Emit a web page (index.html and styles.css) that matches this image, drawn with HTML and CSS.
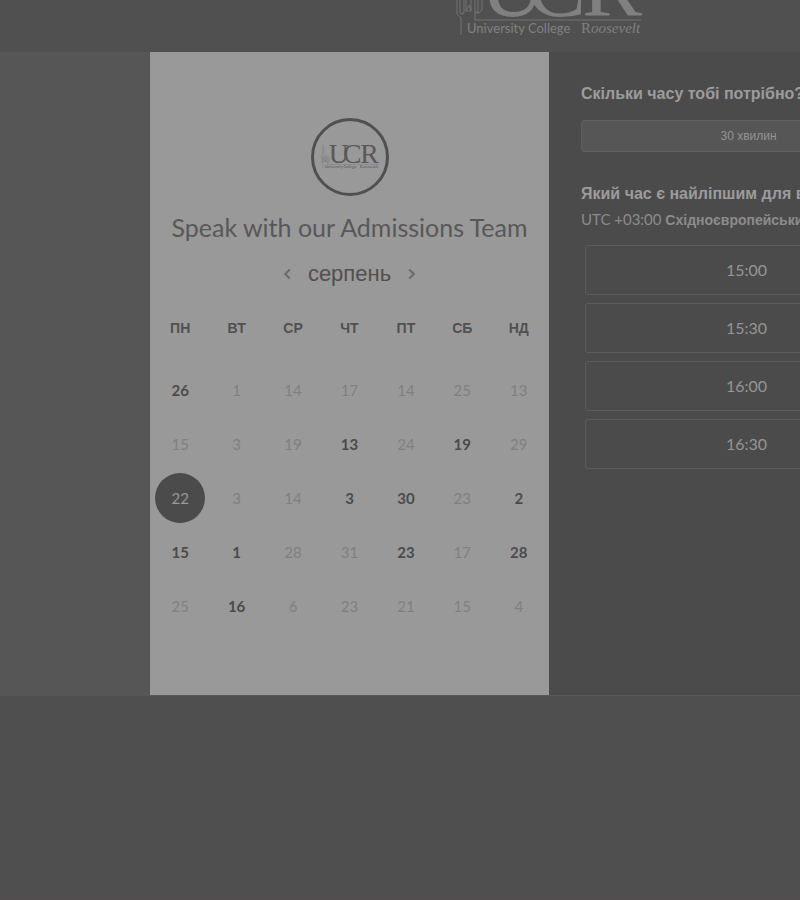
FILE: index.html
```html
<!DOCTYPE html>
<html lang="uk">
<head>
<meta charset="utf-8">
<title>Speak with our Admissions Team</title>
<link rel="stylesheet" href="styles.css">
</head>
<body>
<div class="page">
  <header class="top">
    <svg class="brand" viewBox="0 0 188 84" role="img" aria-label="University College Roosevelt">
      <defs>
        <g id="logo">
          <path class="tower" d="M6 81V64l-4-4V36l3-7V10l2-8 2 8v19l2 7v21h5V42l2-6 2 6v16h3V44l2-4 2 4v12l-3 3h-3M5 40v19l2 1 2-1V40M11 57l3-6 2 6M20 58v8"/>
          <path class="rule" d="M20 66h166"/>
          <text class="letters" y="62"><tspan x="25">U</tspan><tspan x="71">C</tspan><tspan x="127">R</tspan></text>
          <text class="caption" x="12" y="79">University College</text>
          <text class="caption-em" x="126" y="79">R<tspan class="slant">oosevelt</tspan></text>
        </g>
      </defs>
      <use href="#logo"/>
    </svg>
  </header>
  <main class="stage">
    <section class="calendar">
      <div class="avatar">
        <svg class="badge" viewBox="0 0 188 84" aria-hidden="true"><use href="#logo"/></svg>
      </div>
      <h1 class="title">Speak with our Admissions Team</h1>
      <div class="month">
        <button class="arrow" type="button" aria-label="Попередній місяць"><svg viewBox="0 0 8 12"><path d="M6 2 2 6l4 4"/></svg></button>
        <h2 class="month-name">серпень</h2>
        <button class="arrow" type="button" aria-label="Наступний місяць"><svg viewBox="0 0 8 12"><path d="m2 2 4 4-4 4"/></svg></button>
      </div>
      <table class="days">
        <thead><tr><th>ПН</th><th>ВТ</th><th>СР</th><th>ЧТ</th><th>ПТ</th><th>СБ</th><th>НД</th></tr></thead>
        <tbody>
          <tr><td class="open">26</td><td>1</td><td>14</td><td>17</td><td>14</td><td>25</td><td>13</td></tr>
          <tr><td>15</td><td>3</td><td>19</td><td class="open">13</td><td>24</td><td class="open">19</td><td>29</td></tr>
          <tr><td><button class="picked" type="button">22</button></td><td>3</td><td>14</td><td class="open">3</td><td class="open">30</td><td>23</td><td class="open">2</td></tr>
          <tr><td class="open">15</td><td class="open">1</td><td>28</td><td>31</td><td class="open">23</td><td>17</td><td class="open">28</td></tr>
          <tr><td>25</td><td class="open">16</td><td>6</td><td>23</td><td>21</td><td>15</td><td>4</td></tr>
        </tbody>
      </table>
    </section>
    <section class="booking">
      <h3 class="question">Скільки часу тобі потрібно?</h3>
      <button class="duration" type="button">30 хвилин</button>
      <h3 class="question">Який час є найліпшим для вас?</h3>
      <p class="zone">UTC +03:00 <b>Східноєвропейський час</b></p>
      <div class="slots">
        <button class="slot" type="button">15:00</button>
        <button class="slot" type="button">15:30</button>
        <button class="slot" type="button">16:00</button>
        <button class="slot" type="button">16:30</button>
      </div>
    </section>
  </main>
</div>
</body>
</html>
```
FILE: styles.css
```css
* { box-sizing: border-box; }
body {
  margin: 0;
  min-height: 100vh;
  overflow: hidden;
  background: #4f4f4f;
  border-bottom: 1px solid #554c50;
  font-family: "Liberation Sans", sans-serif;
}
button { margin: 0; padding: 0; border: 0; background: none; font: inherit; }
h1, h2, h3, p { margin: 0; font-weight: 400; }

.page { min-width: 1098px; }
.top {
  height: 52px;
  display: flex;
  justify-content: center;
  align-items: flex-end;
  padding-bottom: 14px;
  background: #505050;
}
.brand { width: 188px; height: 84px; flex: none; color: #808080; overflow: visible; }
.tower, .rule { fill: none; stroke: currentColor; stroke-width: 1; opacity: .7; }
.letters { font: 90px "Liberation Serif", serif; fill: currentColor; }
.caption { font: 13px Lato, sans-serif; fill: currentColor; }
.caption-em { font: 15px "Liberation Serif", serif; fill: currentColor; }
.slant { font-style: italic; }

.stage {
  display: flex;
  justify-content: center;
  background: #565656;
  border-bottom: 1px solid #585858;
}
.calendar {
  width: 399px;
  min-height: 643px;
  padding: 66px 2px 0;
  display: flex;
  flex-direction: column;
  align-items: center;
  background: #999;
  color: #505050;
}
.avatar {
  width: 78px;
  height: 78px;
  display: flex;
  align-items: center;
  justify-content: center;
  border: 3px solid #505050;
  border-radius: 50%;
}
.badge { width: 58px; height: 26px; color: #585858; overflow: visible; }
.title { margin-top: 15px; font: 25px/32px Lato, sans-serif; white-space: nowrap; color: #585858; }
.month { display: flex; align-items: center; gap: 12px; margin-top: 16px; }
.month-name { font-size: 22px; line-height: 30px; color: #505050; }
.arrow { width: 16px; height: 24px; display: flex; align-items: center; justify-content: center; }
.arrow svg { width: 9px; height: 14px; fill: none; stroke: #6c6c6c; stroke-width: 2; }

.days {
  width: 100%;
  margin-top: 14px;
  table-layout: fixed;
  border-collapse: collapse;
  text-align: center;
}
.days th { height: 50px; padding: 0; font-size: 14px; }
.days thead::after { content: ""; display: block; height: 10px; }
.days td { height: 54px; padding: 0; font: 15px Lato, sans-serif; color: #808080; }
.days .open { color: #4b4b4b; font-weight: 700; }
.picked { width: 50px; height: 50px; border-radius: 50%; background: #4b4b4b; color: #999; }

.booking { width: 399px; padding: 32px 32px 0; background: #4b4b4b; color: #9c9c9c; }
.question { font-size: 16px; line-height: 20px; font-weight: 700; white-space: nowrap; }
.duration {
  width: 100%;
  height: 32px;
  margin: 16px 0 32px;
  display: block;
  border: 1px solid #5e5e5e;
  border-radius: 3px;
  background: #565656;
  color: #949494;
  font-size: 12px;
}
.zone { margin-top: 5px; font: 15px/20px Lato, sans-serif; white-space: nowrap; color: #8c8c8c; }
.zone b { font-family: "Liberation Sans", sans-serif; font-size: 14px; }
.slots { display: grid; gap: 8px; padding: 0 4px; margin-top: 15px; }
.slot {
  height: 50px;
  padding: 0 4px 2px 0;
  border: 1px solid #5c5c5c;
  border-radius: 3px;
  color: #959595;
  font: 16px Lato, sans-serif;
}
```
